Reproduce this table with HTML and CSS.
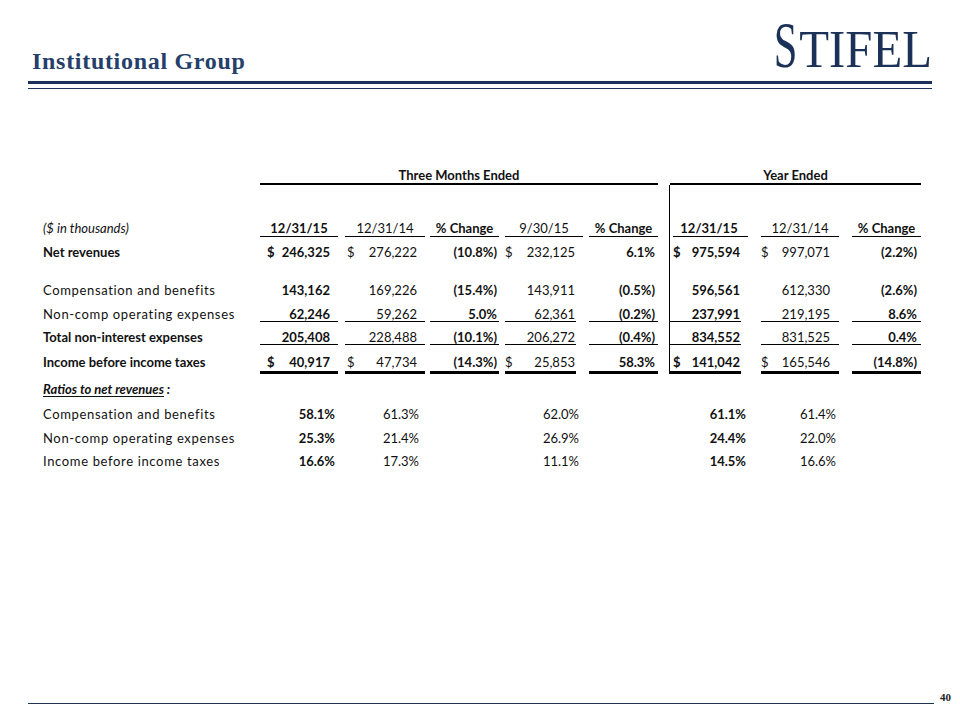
FILE: index.html
```html
<!DOCTYPE html>
<html lang="en">
<head>
<meta charset="utf-8">
<title>Institutional Group</title>
<link rel="stylesheet" href="styles.css">
</head>
<body>
<div class="slide">
  <header class="top">
    <h1 class="title">Institutional Group</h1>
    <div class="logo"><span class="logo-s">S</span><span class="logo-rest">TIFEL</span></div>
  </header>
  <div class="rule-thick"></div>
  <div class="rule-thin"></div>

  <div class="fin">
    <!-- group headers -->
    <div class="lbl"></div>
    <div class="grp grp-3m">Three Months Ended</div>
    <div class="grp grp-yr">Year Ended</div>

    <div class="sp"></div><div class="k c6 vl"></div>

    <!-- column headers -->
    <div class="lbl it">($ in thousands)</div>
    <div class="k c1 h b u">12/31/15</div>
    <div class="k c2 h u">12/31/14</div>
    <div class="k c3 h b u">% Change</div>
    <div class="k c4 h u">9/30/15</div>
    <div class="k c5 h b u">% Change</div>
    <div class="k c6 h b vl hu">12/31/15</div>
    <div class="k c7 h u">12/31/14</div>
    <div class="k c8 h b u">% Change</div>

    <!-- net revenues -->
    <div class="lbl b">Net revenues</div>
    <div class="k c1 n b"><span class="d">$</span><span>246,325</span></div>
    <div class="k c2 n"><span class="d">$</span><span>276,222</span></div>
    <div class="k c3 p b">(10.8%)</div>
    <div class="k c4 n"><span class="d">$</span><span>232,125</span></div>
    <div class="k c5 p b">6.1%</div>
    <div class="k c6 n b vl"><span class="d">$</span><span>975,594</span></div>
    <div class="k c7 n"><span class="d">$</span><span>997,071</span></div>
    <div class="k c8 p b">(2.2%)</div>

    <div class="sp"></div><div class="k c6 vl"></div>

    <!-- compensation -->
    <div class="lbl lt">Compensation and benefits</div>
    <div class="k c1 n b"><span>143,162</span></div>
    <div class="k c2 n"><span>169,226</span></div>
    <div class="k c3 p b">(15.4%)</div>
    <div class="k c4 n"><span>143,911</span></div>
    <div class="k c5 p b">(0.5%)</div>
    <div class="k c6 n b vl"><span>596,561</span></div>
    <div class="k c7 n"><span>612,330</span></div>
    <div class="k c8 p b">(2.6%)</div>

    <!-- non-comp -->
    <div class="lbl lt">Non-comp operating expenses</div>
    <div class="k c1 n b u"><span>62,246</span></div>
    <div class="k c2 n u"><span>59,262</span></div>
    <div class="k c3 p b u">5.0%</div>
    <div class="k c4 n u"><span>62,361</span></div>
    <div class="k c5 p b u">(0.2%)</div>
    <div class="k c6 n b vl u"><span>237,991</span></div>
    <div class="k c7 n u"><span>219,195</span></div>
    <div class="k c8 p b u">8.6%</div>

    <!-- total -->
    <div class="lbl b">Total non-interest expenses</div>
    <div class="k c1 n b u"><span>205,408</span></div>
    <div class="k c2 n u"><span>228,488</span></div>
    <div class="k c3 p b u">(10.1%)</div>
    <div class="k c4 n u"><span>206,272</span></div>
    <div class="k c5 p b u">(0.4%)</div>
    <div class="k c6 n b vl u"><span>834,552</span></div>
    <div class="k c7 n u"><span>831,525</span></div>
    <div class="k c8 p b u">0.4%</div>

    <!-- income -->
    <div class="lbl b inc">Income before income taxes</div>
    <div class="k c1 n b uu inc"><span class="d">$</span><span>40,917</span></div>
    <div class="k c2 n uu inc"><span class="d">$</span><span>47,734</span></div>
    <div class="k c3 p b uu inc">(14.3%)</div>
    <div class="k c4 n uu inc"><span class="d">$</span><span>25,853</span></div>
    <div class="k c5 p b uu inc">58.3%</div>
    <div class="k c6 n b vl uu inc"><span class="d">$</span><span>141,042</span></div>
    <div class="k c7 n uu inc"><span class="d">$</span><span>165,546</span></div>
    <div class="k c8 p b uu inc">(14.8%)</div>

    <!-- ratios -->
    <div class="lbl b it"><span class="ul">Ratios to net revenues</span> :</div>

    <div class="lbl lt">Compensation and benefits</div>
    <div class="k c1 r b">58.1%</div>
    <div class="k c2 r">61.3%</div>
    <div class="k c3"></div>
    <div class="k c4 r">62.0%</div>
    <div class="k c5"></div>
    <div class="k c6 r b">61.1%</div>
    <div class="k c7 r">61.4%</div>

    <div class="lbl lt">Non-comp operating expenses</div>
    <div class="k c1 r b">25.3%</div>
    <div class="k c2 r">21.4%</div>
    <div class="k c3"></div>
    <div class="k c4 r">26.9%</div>
    <div class="k c5"></div>
    <div class="k c6 r b">24.4%</div>
    <div class="k c7 r">22.0%</div>

    <div class="lbl lt">Income before income taxes</div>
    <div class="k c1 r b">16.6%</div>
    <div class="k c2 r">17.3%</div>
    <div class="k c3"></div>
    <div class="k c4 r">11.1%</div>
    <div class="k c5"></div>
    <div class="k c6 r b">14.5%</div>
    <div class="k c7 r">16.6%</div>
  </div>

  <footer class="foot">
    <div class="foot-line"></div>
    <div class="pg">40</div>
  </footer>
</div>
</body>
</html>
```

FILE: styles.css
```css
html, body {
  margin: 0;
  padding: 0;
  background: #ffffff;
}

.slide {
  width: 960px;
  height: 720px;
  display: flex;
  flex-direction: column;
  overflow: hidden;
  font-family: Lato, "Open Sans", "Liberation Sans", sans-serif;
  color: #111;
}

/* ---------- header ---------- */
.top {
  height: 81px;
  box-sizing: border-box;
  display: flex;
  justify-content: space-between;
  align-items: flex-end;
  padding: 0 28px;
}

.title {
  margin: 0 0 8px 4px;
  font-family: "Liberation Serif", "Times New Roman", serif;
  font-weight: 700;
  font-size: 24px;
  line-height: 24px;
  letter-spacing: 0.7px;
  color: #263f6a;
}

.logo {
  display: flex;
  align-items: baseline;
  line-height: 1;
  margin-bottom: 3px;
  font-family: "Liberation Serif", "Times New Roman", serif;
  color: #1c3158;
  transform: scaleX(0.92);
  transform-origin: right bottom;
}

.logo-s {
  font-size: 66px;
  transform: scaleX(0.7);
  transform-origin: left bottom;
  margin-right: -9px;
}

.logo-rest {
  font-size: 53px;
}

.rule-thick {
  height: 3px;
  margin: 0 28px;
  background: #1a3258;
}

.rule-thin {
  height: 1px;
  margin: 4px 28px 0;
  background: #1a3258;
}

/* ---------- financial table ---------- */
.fin {
  margin: 71px 0 0 42px;
  display: grid;
  grid-template-columns: 218px 78px 87px 74px 84px 75px 90px 91px 82px;
  grid-template-rows: 25px 28px 24px 24px 14px 23.5px 23.5px 23px 29px 25px 23.5px 23.5px 23.5px;
  font-size: 13px;
  line-height: 15px;
}

.fin > div {
  box-sizing: border-box;
  padding-top: 8px;
  white-space: nowrap;
}

.lbl {
  grid-column: 1;
  padding-left: 1px;
}

.sp {
  grid-column: 1 / 7;
}

.grp {
  font-weight: 700;
  text-align: center;
  border-bottom: 2px solid #000;
}

.grp-3m {
  grid-column: 2 / 7;
}

.grp-yr {
  grid-column: 7 / 10;
  margin-left: 12px;
}

.b { font-weight: 700; }
.it { font-style: italic; }
.lt { letter-spacing: 0.65px; }
.ul { text-decoration: underline; text-underline-offset: 2px; }

/* column slots */
.c2 { margin-left: 7px; }
.c3 { margin-left: 5px; }
.c4 { margin-left: 6px; }
.c5 { margin-left: 6px; }
.c6 { margin-left: 11px; }
.c7 { margin-left: 13px; }
.c8 { margin-left: 13px; }

.vl { border-left: 1px solid #000; }

.h { text-align: center; }

.u { border-bottom: 1px solid #000; }
.uu { border-bottom: 3px solid #000; }
.inc { padding-top: 9.5px !important; }

.hu {
  background-image: linear-gradient(#000, #000);
  background-repeat: no-repeat;
  background-size: calc(100% - 3px) 1px;
  background-position: 3px 100%;
}

/* numbers */
.n {
  display: flex;
  justify-content: flex-end;
}
.n .d { margin-right: auto; }

.c1.n { padding-left: 7px; padding-right: 8px; }
.c2.n { padding-left: 2px; padding-right: 8px; }
.c4.n { padding-right: 1px; margin-right: 7px; }
.c6.n { padding-left: 3px; padding-right: 1px; margin-right: 7px; }
.c7.n { padding-right: 9px; }

/* percent change */
.p { text-align: right; padding-right: 3px; }
.c3.p { padding-right: 2px; }
.c8.p { padding-right: 4px; }

/* ratios */
.r { text-align: right; padding-right: 3px; }
.c2.r { padding-right: 6px; }
.c4.r { padding-right: 4px; }
.c6.r { padding-right: 2px; }

/* ---------- footer ---------- */
.foot {
  margin-top: auto;
  height: 32px;
  display: flex;
  align-items: flex-start;
  padding-left: 28px;
}

.foot-line {
  width: 906px;
  height: 1px;
  margin-top: 15px;
  background: #1b3550;
}

.pg {
  margin: 4px 0 0 6px;
  font-family: "Liberation Serif", "Times New Roman", serif;
  font-weight: 700;
  font-size: 11px;
  line-height: 11px;
  color: #222;
}
```
